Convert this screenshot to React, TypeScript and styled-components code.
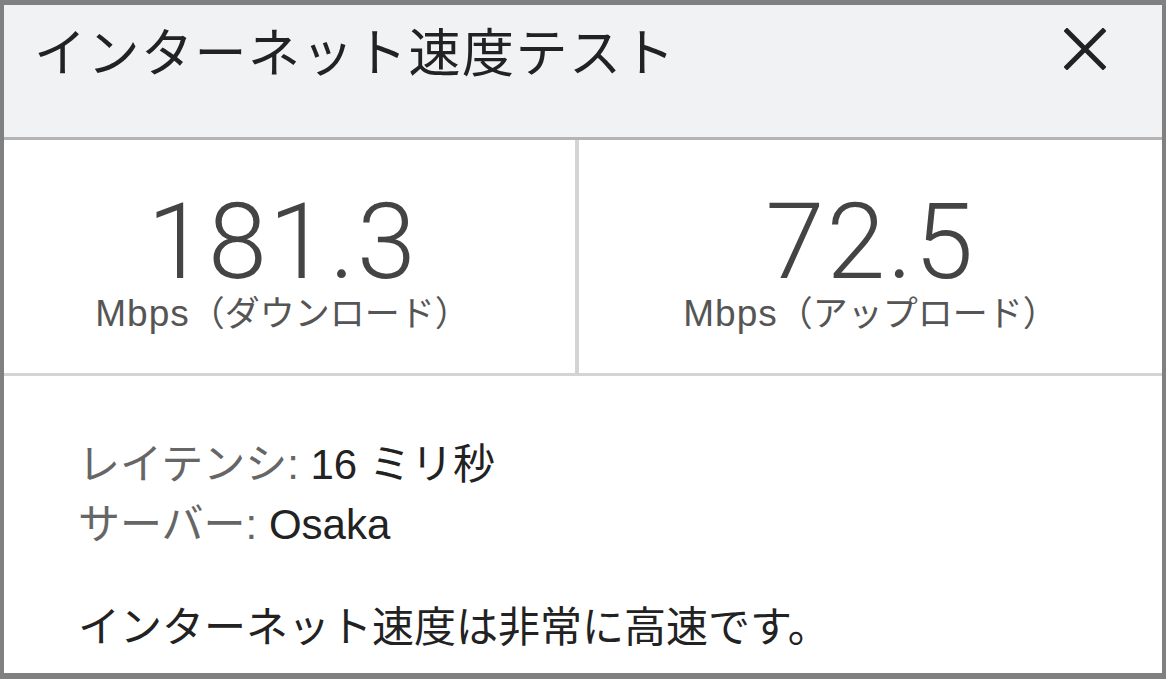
import styled, { createGlobalStyle } from "styled-components";

const GlobalStyle = createGlobalStyle`
  html, body {
    margin: 0;
    padding: 0;
    background: #ffffff;
  }
  * {
    box-sizing: border-box;
  }
`;

const font = `"Liberation Sans", "Noto Sans CJK JP", sans-serif`;

const Dialog = styled.div`
  width: 1166px;
  height: 679px;
  border-style: solid;
  border-color: #808080;
  border-width: 5px 4px 6px 4px;
  display: flex;
  flex-direction: column;
  font-family: ${font};
  background: #fff;
  overflow: hidden;
`;

const Header = styled.header`
  height: 135px;
  flex-shrink: 0;
  display: flex;
  justify-content: space-between;
  align-items: flex-start;
  padding: 23px 56px 0 30px;
  background: #f1f2f4;
  border-bottom: 3px solid #b4b4b4;
`;

const Title = styled.h1`
  margin: 0;
  font-size: 52px;
  line-height: 52px;
  font-weight: 400;
  color: #222;
  letter-spacing: 1.5px;
`;

const CloseButton = styled.button`
  border: none;
  background: none;
  padding: 0;
  width: 42px;
  height: 42px;
  cursor: pointer;
  svg {
    display: block;
  }
`;

const Stats = styled.div`
  height: 236px;
  flex-shrink: 0;
  display: grid;
  grid-template-columns: 575px 1fr;
  border-bottom: 3px solid #d4d4d4;
`;

const StatCell = styled.div<{ divided?: boolean; shift?: number }>`
  display: flex;
  flex-direction: column;
  align-items: center;
  justify-content: center;
  padding-top: 18px;
  padding-right: ${(p) => p.shift ?? 0}px;
  border-right: ${(p) => (p.divided ? "4px solid #d4d4d4" : "none")};
`;

const StatValue = styled.div`
  font-family: Roboto, "Liberation Sans", sans-serif;
  font-weight: 300;
  font-size: 106px;
  line-height: 90px;
  letter-spacing: 2px;
  color: #444;
`;

const StatLabel = styled.div`
  margin-top: 6px;
  font-size: 35px;
  line-height: 42px;
  color: #555;
`;

const Unit = styled.span`
  font-size: 37px;
  letter-spacing: 1px;
`;

const Details = styled.div`
  flex: 1;
  padding: 59px 0 0 74px;
`;

const InfoLine = styled.div`
  font-size: 42px;
  line-height: 60px;
  color: #222;
`;

const InfoKey = styled.span`
  color: #666;
`;

const Verdict = styled.p`
  margin: 43px 0 0;
  font-size: 42px;
  line-height: 60px;
  color: #222;
`;

function App() {
  return (
    <>
      <GlobalStyle />
      <Dialog>
        <Header>
          <Title>インターネット速度テスト</Title>
          <CloseButton aria-label="閉じる">
            <svg width="42" height="42" viewBox="0 0 42 42">
              <path
                d="M3 3 L39 39 M39 3 L3 39"
                stroke="#222"
                strokeWidth="5"
                strokeLinecap="square"
              />
            </svg>
          </CloseButton>
        </Header>
        <Stats>
          <StatCell divided shift={14}>
            <StatValue>181.3</StatValue>
            <StatLabel>
              <Unit>Mbps</Unit>（ダウンロード）
            </StatLabel>
          </StatCell>
          <StatCell>
            <StatValue>72.5</StatValue>
            <StatLabel>
              <Unit>Mbps</Unit>（アップロード）
            </StatLabel>
          </StatCell>
        </Stats>
        <Details>
          <InfoLine>
            <InfoKey>レイテンシ:</InfoKey> 16 ミリ秒
          </InfoLine>
          <InfoLine>
            <InfoKey>サーバー:</InfoKey> Osaka
          </InfoLine>
          <Verdict>インターネット速度は非常に高速です。</Verdict>
        </Details>
      </Dialog>
    </>
  );
}

export default App;
